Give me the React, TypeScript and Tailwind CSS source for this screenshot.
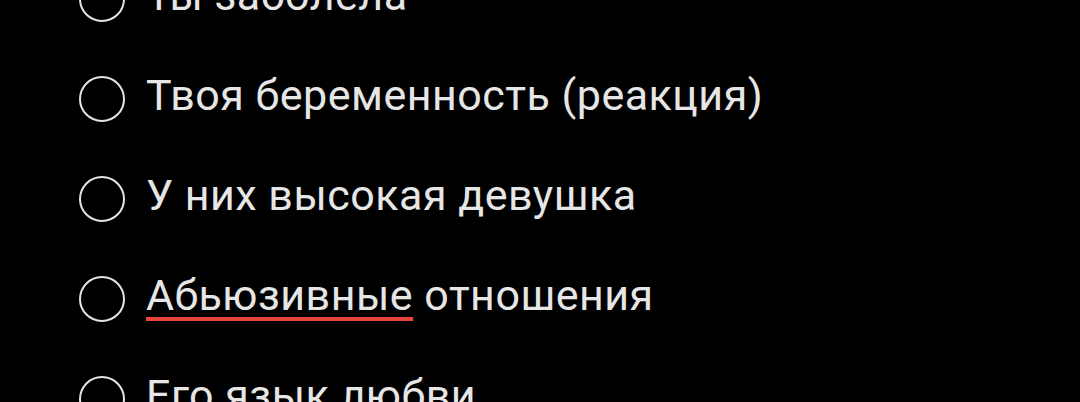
export default function App() {
    const items = [
        { text: "Ты заболела" },
        { text: "Твоя беременность (реакция)" },
        { text: "У них высокая девушка" },
        { text: "Абьюзивные", rest: " отношения", flagged: true },
        { text: "Его язык любви" },
    ];

    return (
        <div className="h-[402px] w-[1080px] overflow-hidden bg-black" style={{ fontFamily: "Roboto, 'Noto Sans', sans-serif" }}>
            <div className="-mt-[51px] flex flex-col pl-[79px]">
                {items.map((item) => (
                    <div key={item.text} className="flex h-[100px] items-center gap-[21px]">
                        <div className="h-[46px] w-[46px] shrink-0 rounded-full border-2 border-[#e4e4e4]" />
                        <span className="-mt-[7px] whitespace-nowrap text-[43px] leading-none tracking-[0.5px] text-[#e6e6e6]">
                            {item.flagged ? (
                                <>
                                    <span className="underline decoration-[#e8453c] decoration-[4px] underline-offset-[7px]">{item.text}</span>
                                    {item.rest}
                                </>
                            ) : (
                                item.text
                            )}
                        </span>
                    </div>
                ))}
            </div>
        </div>
    );
}
